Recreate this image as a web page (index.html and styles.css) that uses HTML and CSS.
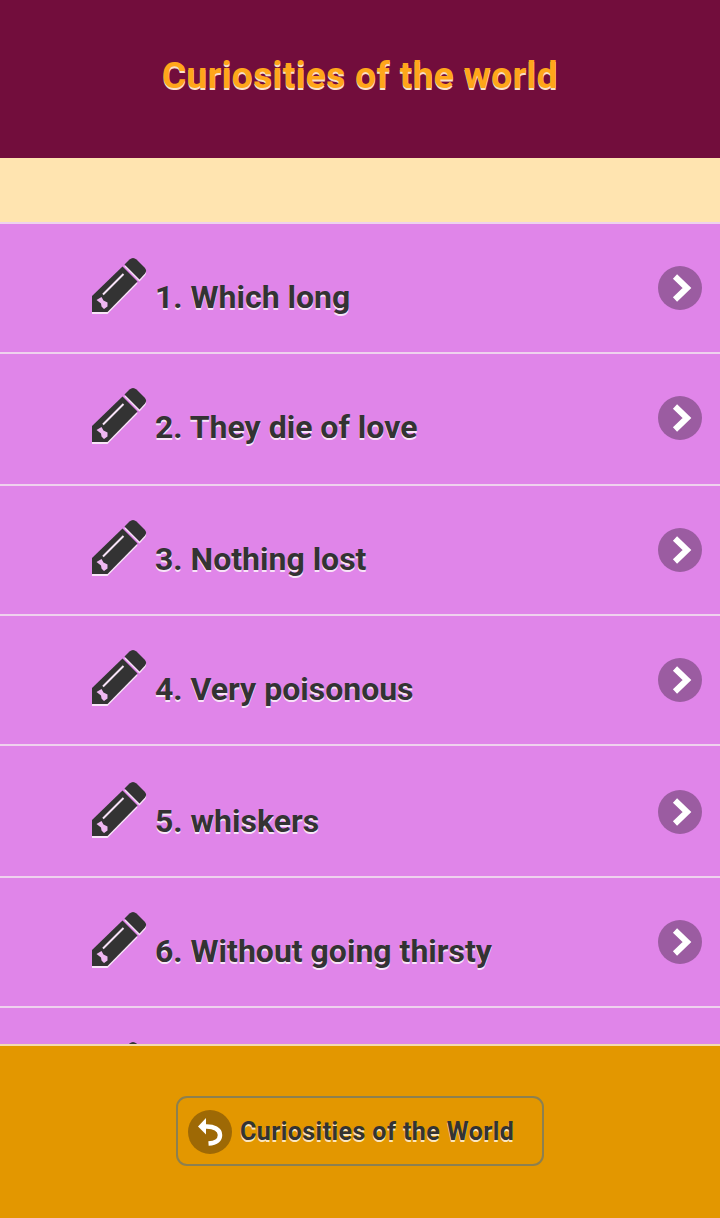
FILE: index.html
```
<!DOCTYPE html>
<html lang="en">
<head>
<meta charset="utf-8">
<title>Curiosities of the world</title>
<link rel="stylesheet" href="styles.css">
</head>
<body>
<svg width="0" height="0" class="defs" aria-hidden="true">
  <symbol id="pencil-shape" viewBox="0 0 56 58">
    <path d="M0 54V38L30.500 8.500L45.500 23.500L15.500 54Z"/>
    <path d="M32.500 6.500L37.500 1.500Q41 -1.500 44.500 1.500L52.500 9.500Q55.500 12.500 53 15.500L47.500 21.500Z"/>
  </symbol>
  <symbol id="pencil" viewBox="0 0 56 58">
    <use href="#pencil-shape" class="glow" y="2" width="56" height="58"/>
    <use href="#pencil-shape" width="56" height="58"/>
    <path d="M11 36.500L31.500 16" class="shine"/>
    <path d="M4.500 42L9.500 39L11.500 42.500L15.500 44.500V48.500L12 51L9.500 48.500L9 45.500Z" class="nib"/>
  </symbol>
  <symbol id="chevron" viewBox="0 0 44 44">
    <circle cx="22" cy="22" r="22" class="disc"/>
    <path d="M17 10.500L29 22L17 33.500" class="arrow"/>
  </symbol>
</svg>
<div class="page">
  <header class="header"><h1>Curiosities of the world</h1></header>
  <div class="strip"></div>
  <main class="list">
    <a class="row"><svg class="pencil"><use href="#pencil"/></svg><span>1. Which long</span><svg class="chevron"><use href="#chevron"/></svg></a>
    <a class="row tall"><svg class="pencil"><use href="#pencil"/></svg><span>2. They die of love</span><svg class="chevron"><use href="#chevron"/></svg></a>
    <a class="row"><svg class="pencil"><use href="#pencil"/></svg><span>3. Nothing lost</span><svg class="chevron"><use href="#chevron"/></svg></a>
    <a class="row"><svg class="pencil"><use href="#pencil"/></svg><span>4. Very poisonous</span><svg class="chevron"><use href="#chevron"/></svg></a>
    <a class="row tall low"><svg class="pencil"><use href="#pencil"/></svg><span>5. whiskers</span><svg class="chevron"><use href="#chevron"/></svg></a>
    <a class="row"><svg class="pencil"><use href="#pencil"/></svg><span>6. Without going thirsty</span><svg class="chevron"><use href="#chevron"/></svg></a>
    <a class="row"><svg class="pencil"><use href="#pencil"/></svg></a>
  </main>
  <footer class="footer">
    <a class="back">
      <svg class="back-icon" viewBox="0 0 44 44"><circle cx="22" cy="22" r="22"/><path class="head" d="M10 16.500L18 8V24.500Z"/><path class="tail" d="M17 16.500C26 16 32 19.500 32 25C32 30 28 33 20.500 33.500"/></svg>
      <span>Curiosities of the World</span>
    </a>
  </footer>
</div>
</body>
</html>
```
FILE: styles.css
```
* { box-sizing: border-box; }
body { margin: 0; font-family: Roboto, sans-serif; font-weight: 700; color: #333; }
.defs { position: absolute; }
.page { width: 720px; height: 1218px; display: flex; flex-direction: column; overflow: hidden; }
.header { height: 158px; flex: none; background: #720d3c; display: flex; justify-content: center; padding-top: 54px; }
h1 { margin: 0; font-size: 37px; line-height: 44px; letter-spacing: 0.4px; color: #ffa61a; text-shadow: 0 2px 0 #f8e0c8; white-space: nowrap; }
.strip { height: 64px; flex: none; background: #ffe4b0; }
.list { height: 822px; flex: none; overflow: hidden; }
.row { height: 130px; border-top: 2px solid #efd2ee; background: #e085e9; display: flex; align-items: flex-start; padding: 34px 18px 0 92px; }
.row.tall { height: 132px; }
.row.low { padding-top: 36px; }
.row span { margin: 19px 0 0 7px; flex: 1; font-size: 32px; line-height: 40px; text-shadow: 0 2px 0 #f8e4f8; white-space: nowrap; }
.pencil { width: 56px; height: 58px; flex: none; fill: #333; }
.glow { fill: #f8e4f8; }
.shine { stroke: #f8e4f8; stroke-width: 2; fill: none; }
.nib { fill: #efb8f2; }
.chevron { width: 44px; height: 44px; flex: none; margin-top: 8px; }
.disc { fill: #9b5ca1; }
.arrow { fill: none; stroke: #fff; stroke-width: 6; }
.footer { flex: 1; border-top: 2px solid #f3dcb0; background: #e39700; display: flex; justify-content: center; align-items: flex-start; padding-top: 50px; }
.back { width: 368px; height: 70px; border: 2px solid #8c8050; border-radius: 11px; display: flex; align-items: center; padding-left: 10px; gap: 8px; }
.back-icon { width: 44px; height: 44px; flex: none; fill: #9e6905; margin-top: 2px; }
.back-icon .head { fill: #fff; }
.back-icon .tail { fill: none; stroke: #fff; stroke-width: 4.500; }
.back span { font-size: 25px; line-height: 32px; letter-spacing: 0.42px; margin-top: 2px; text-shadow: 0 2px 0 #fbe6bf; white-space: nowrap; }
```
